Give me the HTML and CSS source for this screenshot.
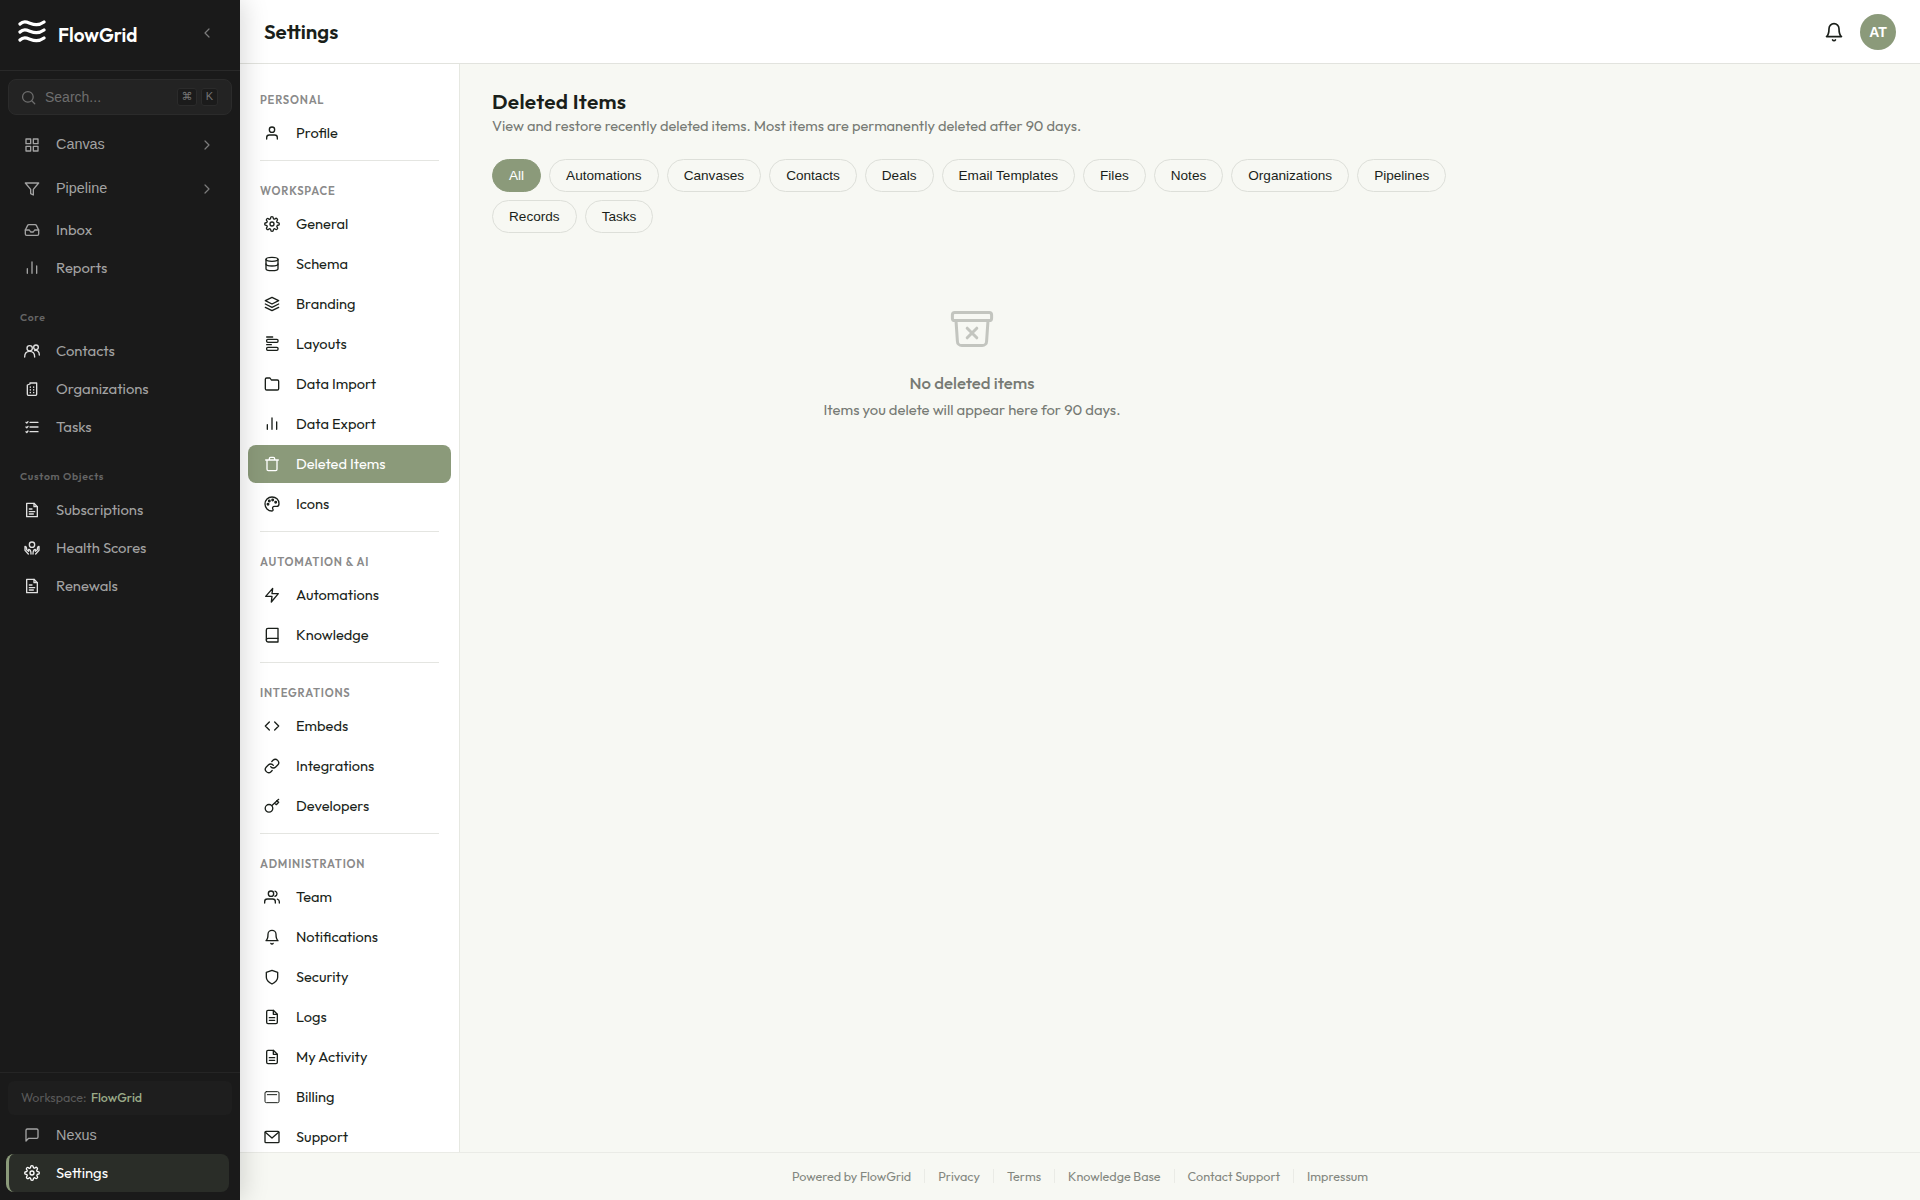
FILE: index.html
```html
<!DOCTYPE html>
<html lang="en">
<head>
    <meta charset="UTF-8">
    <meta name="viewport" content="width=device-width, initial-scale=1.0">
    <title>Settings - FlowGrid</title>
    <link rel="stylesheet" href="styles.css">
</head>

<body>
    <!-- Icon sprite -->
    <svg class="sprite" xmlns="http://www.w3.org/2000/svg">
        <symbol id="i-grid" viewBox="0 0 24 24"><rect x="3" y="3" width="7" height="7"/><rect x="14" y="3" width="7" height="7"/><rect x="14" y="14" width="7" height="7"/><rect x="3" y="14" width="7" height="7"/></symbol>
        <symbol id="i-funnel" viewBox="0 0 24 24"><path d="M22 3H2l8 9.46V19l4 2v-8.54L22 3z"/></symbol>
        <symbol id="i-inbox" viewBox="0 0 24 24"><path d="M22 12h-6l-2 3h-4l-2-3H2"/><path d="M5.45 5.11 2 12v6a2 2 0 0 0 2 2h16a2 2 0 0 0 2-2v-6l-3.45-6.89A2 2 0 0 0 16.76 4H7.24a2 2 0 0 0-1.79 1.11z"/></symbol>
        <symbol id="i-bars" viewBox="0 0 24 24"><path d="M5 20v-7M12 20V3M19 20V9"/></symbol>
        <symbol id="i-contacts" viewBox="0 0 24 24"><circle cx="8.5" cy="8" r="4"/><path d="M1 21c0-5 3-8.500 7.500-8.500S16 16 16 21"/><circle cx="18" cy="6.500" r="3.500"/><path d="M16 11.500c4-1.500 7 1.500 7 6.500"/></symbol>
        <symbol id="i-building" viewBox="0 0 24 24"><path d="M5 20V6l4-1.500V3h10v17a1.500 1.500 0 0 1-1.500 1.500h-11A1.500 1.500 0 0 1 5 20z"/><path d="M9.500 9v.5M14.500 9v.5M9.500 13v.5M14.500 13v.5M9.500 17v.5M14.500 17v.5"/></symbol>
        <symbol id="i-tasks" viewBox="0 0 24 24"><path d="M9 5h12M9 12h12M9 19h12M3 5l1.200 1.200L6 4M3 12l1.200 1.200L6 11M3 19l1.200 1.200L6 18"/></symbol>
        <symbol id="i-doc" viewBox="0 0 24 24"><path d="M14 2H6a2 2 0 0 0-2 2v16a2 2 0 0 0 2 2h12a2 2 0 0 0 2-2V8z"/><path d="M14 2v6h6M16 13H8M16 17H8"/></symbol>
        <symbol id="i-record" viewBox="0 0 24 24"><path d="M15 2H4v20h16V7z"/><path d="M15 2v5h5M8 10.500h4M8 14.500h8M8 18h6"/></symbol>
        <symbol id="i-health" viewBox="0 0 24 24"><circle cx="12" cy="7" r="4"/><path d="M1.500 9.500v6l5 5.500M1.500 9.500c2.500 0 2.500 2 2.500 5l3 2.500v-3c3 0 3.500 3 3.500 7M22.500 9.500v6l-5 5.500M22.500 9.500c-2.500 0-2.500 2-2.500 5L17 17v-3c-3 0-3.500 3-3.500 7"/></symbol>
        <symbol id="i-chat" viewBox="0 0 24 24"><path d="M21 15a2 2 0 0 1-2 2H7l-4 4V5a2 2 0 0 1 2-2h14a2 2 0 0 1 2 2z"/></symbol>
        <symbol id="i-gear" viewBox="0 0 24 24"><circle cx="12" cy="12" r="3"/><path d="M19.400 15a1.650 1.650 0 0 0 .33 1.820l.06.06a2 2 0 0 1-2.830 2.830l-.06-.06a1.650 1.650 0 0 0-2.800 1.170V21a2 2 0 0 1-4 0v-.09a1.650 1.650 0 0 0-2.900-1.180l-.06.06a2 2 0 0 1-2.830-2.830l.06-.06a1.650 1.650 0 0 0-1.170-2.800H3a2 2 0 0 1 0-4h.09a1.650 1.650 0 0 0 1.180-2.900l-.06-.06a2 2 0 0 1 2.830-2.830l.06.06a1.650 1.650 0 0 0 2.800-1.170V3a2 2 0 0 1 4 0v.09a1.650 1.650 0 0 0 2.800 1.170l.06-.06a2 2 0 0 1 2.830 2.830l-.06.06a1.650 1.650 0 0 0 1.170 2.800H21a2 2 0 0 1 0 4h-.09a1.650 1.650 0 0 0-1.510 1.110z"/></symbol>
        <symbol id="i-search" viewBox="0 0 24 24"><circle cx="11" cy="11" r="8.500"/><path d="m22 22-4.500-4.500"/></symbol>
        <symbol id="i-right" viewBox="0 0 24 24"><path d="m9 18 6-6-6-6"/></symbol>
        <symbol id="i-left" viewBox="0 0 24 24"><path d="m15 18-6-6 6-6"/></symbol>
        <symbol id="i-user" viewBox="0 0 24 24"><circle cx="12" cy="7" r="4"/><path d="M20 21v-2a4 4 0 0 0-4-4H8a4 4 0 0 0-4 4v2"/></symbol>
        <symbol id="i-database" viewBox="0 0 24 24"><ellipse cx="12" cy="5" rx="9" ry="3"/><path d="M21 12c0 1.660-4 3-9 3s-9-1.340-9-3"/><path d="M3 5v14c0 1.660 4 3 9 3s9-1.340 9-3V5"/></symbol>
        <symbol id="i-layers" viewBox="0 0 24 24"><path d="M12 2 2 7l10 5 10-5-10-5z"/><path d="m2 17 10 5 10-5M2 12l10 5 10-5"/></symbol>
        <symbol id="i-layout" viewBox="0 0 24 24"><path d="M4 1.500h9M4 13h7"/><rect x="4" y="5" width="17" height="4.500" rx="1.500"/><rect x="4" y="17" width="17" height="4.500" rx="1.500"/></symbol>
        <symbol id="i-folder" viewBox="0 0 24 24"><path d="M22 19a2 2 0 0 1-2 2H4a2 2 0 0 1-2-2V5a2 2 0 0 1 2-2h5l2 3h9a2 2 0 0 1 2 2z"/></symbol>
        <symbol id="i-trash" viewBox="0 0 24 24"><path d="M2.500 6h19M19.500 6v14a2 2 0 0 1-2 2h-11a2 2 0 0 1-2-2V6M8 6V4a2 2 0 0 1 2-2h4a2 2 0 0 1 2 2v2"/></symbol>
        <symbol id="i-palette" viewBox="0 0 24 24"><path d="M12 1.500C6 1.500 1.500 6.200 1.500 12S6 22.500 12 22.500c1.600 0 2-1.600 1.300-2.800-1-2-.3-4.200 2.400-4.200H19c2.200 0 3.500-1.500 3.500-4C22.500 5.500 18 1.500 12 1.500z"/><circle cx="6" cy="12.500" r="1.200"/><circle cx="8" cy="7.500" r="1.200"/><circle cx="13" cy="6" r="1.200"/><circle cx="17.500" cy="9.500" r="1.200"/></symbol>
        <symbol id="i-bolt" viewBox="0 0 24 24"><path d="M13 2 2.500 14H12l-1 8.500L21.500 10H12l1-8z"/></symbol>
        <symbol id="i-book" viewBox="0 0 24 24"><path d="M3.500 19.500A2.500 2.500 0 0 1 6 17h15"/><path d="M6 2h15v20.500H6a2.500 2.500 0 0 1-2.500-2.500V4.500A2.500 2.500 0 0 1 6 2z"/></symbol>
        <symbol id="i-code" viewBox="0 0 24 24"><path d="m16 18 6-6-6-6M8 6l-6 6 6 6"/></symbol>
        <symbol id="i-link" viewBox="0 0 24 24"><path d="M10 13a5 5 0 0 0 7.540.54l3-3a5 5 0 0 0-7.070-7.070l-1.720 1.710"/><path d="M14 11a5 5 0 0 0-7.540-.54l-3 3a5 5 0 0 0 7.070 7.070l1.710-1.710"/></symbol>
        <symbol id="i-key" viewBox="0 0 24 24"><circle cx="7.500" cy="15.500" r="5.700"/><path d="M22 2 11.500 11.500M16 7.500l2.500 2.500L22 6.500 19 4"/></symbol>
        <symbol id="i-team" viewBox="0 0 24 24"><path d="M17 21v-2a4 4 0 0 0-4-4H5a4 4 0 0 0-4 4v2"/><circle cx="10.500" cy="7" r="4"/><path d="M23 21v-2a4 4 0 0 0-3-3.870M16.500 3.130a4 4 0 0 1 0 7.750"/></symbol>
        <symbol id="i-bell" viewBox="0 0 24 24"><path d="M18 8A6 6 0 0 0 6 8c0 7-3 9.500-3 9.500h18S18 15 18 8"/><path d="M13.730 21.500a2 2 0 0 1-3.460 0"/></symbol>
        <symbol id="i-shield" viewBox="0 0 24 24"><path d="M12 22.500s8.500-4 8.500-10V5L12 2 3.500 5v7.500c0 6 8.500 10 8.500 10z"/></symbol>
        <symbol id="i-card" viewBox="0 0 24 24"><rect x="1.500" y="4" width="21" height="16.500" rx="2"/><path d="M5 8.500h14"/></symbol>
        <symbol id="i-mail" viewBox="0 0 24 24"><rect x="1.500" y="3.500" width="21" height="17" rx="1.500"/><path d="m2 5 10 8.500L22 5"/></symbol>
        <symbol id="i-archive" viewBox="0 0 24 24"><rect x="2.200" y="3.700" width="19.600" height="4.100" rx="1.200"/><path d="m4 7.800.7 10.300a2.200 2.200 0 0 0 2.200 2.200h10.200a2.200 2.200 0 0 0 2.200-2.200L20 7.800M9.600 11.600l4.800 4.800M14.400 11.600l-4.800 4.800"/></symbol>
    </svg>

    <div class="app">
        <aside class="sidebar">
            <div class="brand">
                <svg class="logo" viewBox="0 0 28 24"><path d="M2 5C9-2 15 11 26 3M2 13C9 6 15 19 26 11M2 21C9 14 15 27 26 19"/></svg>
                <span class="brand-name">FlowGrid</span>
                <svg class="icon collapse"><use href="#i-left"/></svg>
            </div>

            <div class="search">
                <svg class="icon"><use href="#i-search"/></svg>
                <span class="search-text">Search...</span>
                <kbd class="cmd">⌘</kbd>
                <kbd>K</kbd>
            </div>

            <nav class="main-nav">
                <a class="nav-item tall"><svg class="icon"><use href="#i-grid"/></svg><span>Canvas</span><svg class="icon chevron"><use href="#i-right"/></svg></a>
                <a class="nav-item tall"><svg class="icon"><use href="#i-funnel"/></svg><span>Pipeline</span><svg class="icon chevron"><use href="#i-right"/></svg></a>
                <a class="nav-item"><svg class="icon"><use href="#i-inbox"/></svg><span>Inbox</span></a>
                <a class="nav-item"><svg class="icon"><use href="#i-bars"/></svg><span>Reports</span></a>

                <div class="nav-label">Core</div>
                <a class="nav-item object"><svg class="icon"><use href="#i-contacts"/></svg><span>Contacts</span></a>
                <a class="nav-item object"><svg class="icon"><use href="#i-building"/></svg><span>Organizations</span></a>
                <a class="nav-item object"><svg class="icon"><use href="#i-tasks"/></svg><span>Tasks</span></a>

                <div class="nav-label">Custom Objects</div>
                <a class="nav-item object"><svg class="icon"><use href="#i-record"/></svg><span>Subscriptions</span></a>
                <a class="nav-item object"><svg class="icon"><use href="#i-health"/></svg><span>Health Scores</span></a>
                <a class="nav-item object"><svg class="icon"><use href="#i-record"/></svg><span>Renewals</span></a>
            </nav>

            <div class="sidebar-footer">
                <div class="workspace">Workspace: <strong>FlowGrid</strong></div>
                <a class="nav-item button"><svg class="icon"><use href="#i-chat"/></svg><span>Nexus</span></a>
                <a class="nav-item active"><svg class="icon"><use href="#i-gear"/></svg><span>Settings</span></a>
            </div>
        </aside>

        <div class="page">
            <header class="topbar">
                <h1>Settings</h1>
                <svg class="icon bell"><use href="#i-bell"/></svg>
                <div class="avatar">AT</div>
            </header>

            <div class="body">
                <nav class="settings-nav">
                    <section>
                        <h3>Personal</h3>
                        <a><svg class="icon"><use href="#i-user"/></svg><span>Profile</span></a>
                    </section>
                    <section>
                        <h3>Workspace</h3>
                        <a><svg class="icon"><use href="#i-gear"/></svg><span>General</span></a>
                        <a><svg class="icon"><use href="#i-database"/></svg><span>Schema</span></a>
                        <a><svg class="icon"><use href="#i-layers"/></svg><span>Branding</span></a>
                        <a><svg class="icon"><use href="#i-layout"/></svg><span>Layouts</span></a>
                        <a><svg class="icon"><use href="#i-folder"/></svg><span>Data Import</span></a>
                        <a><svg class="icon"><use href="#i-bars"/></svg><span>Data Export</span></a>
                        <a class="active"><svg class="icon"><use href="#i-trash"/></svg><span>Deleted Items</span></a>
                        <a><svg class="icon"><use href="#i-palette"/></svg><span>Icons</span></a>
                    </section>
                    <section>
                        <h3>Automation &amp; AI</h3>
                        <a><svg class="icon"><use href="#i-bolt"/></svg><span>Automations</span></a>
                        <a><svg class="icon"><use href="#i-book"/></svg><span>Knowledge</span></a>
                    </section>
                    <section>
                        <h3>Integrations</h3>
                        <a><svg class="icon"><use href="#i-code"/></svg><span>Embeds</span></a>
                        <a><svg class="icon"><use href="#i-link"/></svg><span>Integrations</span></a>
                        <a><svg class="icon"><use href="#i-key"/></svg><span>Developers</span></a>
                    </section>
                    <section>
                        <h3>Administration</h3>
                        <a><svg class="icon"><use href="#i-team"/></svg><span>Team</span></a>
                        <a><svg class="icon"><use href="#i-bell"/></svg><span>Notifications</span></a>
                        <a><svg class="icon"><use href="#i-shield"/></svg><span>Security</span></a>
                        <a><svg class="icon"><use href="#i-doc"/></svg><span>Logs</span></a>
                        <a><svg class="icon"><use href="#i-doc"/></svg><span>My Activity</span></a>
                        <a><svg class="icon thin"><use href="#i-card"/></svg><span>Billing</span></a>
                        <a><svg class="icon"><use href="#i-mail"/></svg><span>Support</span></a>
                    </section>
                </nav>

                <main class="content">
                    <h2>Deleted Items</h2>
                    <p class="intro">View and restore recently deleted items. Most items are permanently deleted after 90 days.</p>

                    <div class="filters">
                        <button class="active">All</button>
                        <button>Automations</button>
                        <button>Canvases</button>
                        <button>Contacts</button>
                        <button>Deals</button>
                        <button>Email Templates</button>
                        <button>Files</button>
                        <button>Notes</button>
                        <button>Organizations</button>
                        <button>Pipelines</button>
                        <button>Records</button>
                        <button>Tasks</button>
                    </div>

                    <div class="empty">
                        <svg class="icon"><use href="#i-archive"/></svg>
                        <p class="empty-title">No deleted items</p>
                        <p class="empty-text">Items you delete will appear here for 90 days.</p>
                    </div>
                </main>
            </div>

            <footer class="footer">
                <span>Powered by FlowGrid</span>
                <a>Privacy</a>
                <a>Terms</a>
                <a>Knowledge Base</a>
                <a>Contact Support</a>
                <a>Impressum</a>
            </footer>
        </div>
    </div>
</body>
</html>
```
FILE: styles.css
```css
* {
    box-sizing: border-box;
}

body {
    margin: 0;
    font-family: Outfit, Lato, sans-serif;
    font-size: 14.6px;
    color: #1a1f1a;
    background-color: #f7f8f3;
}

h1, h2, h3, p {
    margin: 0;
}

.sprite {
    display: none;
}

.icon {
    width: 16px;
    height: 16px;
    flex-shrink: 0;
    fill: none;
    stroke: currentColor;
    stroke-width: 2;
    stroke-linecap: round;
    stroke-linejoin: round;
    overflow: visible;
}

.icon.thin {
    stroke-width: 1.5;
}

.app {
    display: flex;
    height: 100vh;
    overflow: hidden;
}

/* Sidebar */
.sidebar {
    position: relative;
    z-index: 10;
    display: flex;
    flex-direction: column;
    width: 240px;
    flex-shrink: 0;
    font-size: 14.8px;
    color: #a3a3a3;
    background-color: #1a1a1a;
    box-shadow: 4px 0 24px rgba(0, 0, 0, 0.15);
}

.brand {
    display: flex;
    align-items: center;
    height: 71px;
    padding: 0 25px 4px 18px;
    border-bottom: 1px solid #292929;
}

.logo {
    width: 28px;
    height: 24px;
    margin-top: -5px;
    fill: none;
    stroke: #fff;
    stroke-width: 3.2;
    stroke-linecap: round;
}

.brand-name {
    flex: 1;
    margin: 4px 0 0 12px;
    font-size: 19px;
    font-weight: 600;
    color: #fff;
}

.collapse {
    stroke-width: 1.8;
    color: #7c7c7c;
}

.search {
    display: flex;
    align-items: center;
    gap: 4px;
    height: 36px;
    margin: 8px 8px 0;
    padding: 0 13px 0 12px;
    border: 1px solid #2b2b2b;
    border-radius: 8px;
    background-color: #232323;
    font-family: "Liberation Sans", sans-serif;
    font-size: 14px;
    color: #6e6e6e;
}

.search .icon {
    width: 15px;
    height: 15px;
}

.search-text {
    flex: 1;
    margin-left: 5px;
}

kbd {
    width: 17px;
    height: 18px;
    border: 1px solid #2b2b2b;
    border-radius: 3px;
    background-color: #1b1b1b;
    font-family: "Liberation Sans", "DejaVu Sans", sans-serif;
    font-size: 11px;
    line-height: 15px;
    text-align: center;
    color: #757575;
}

kbd.cmd {
    width: 20px;
}

.main-nav {
    flex: 1;
    padding-top: 8px;
}

.nav-item {
    display: flex;
    align-items: center;
    gap: 16px;
    height: 38px;
    padding: 0 25px 0 24px;
}

.nav-item.tall {
    height: 44px;
}

.nav-item.tall,
.nav-item.button {
    font-family: "Liberation Sans", sans-serif;
    font-size: 14.4px;
}

.nav-item span {
    flex: 1;
    padding-bottom: 1px;
}

.nav-item.tall span {
    padding-bottom: 2px;
}

.nav-item.object .icon {
    color: #e0e0e0;
}

.nav-item .chevron {
    stroke-width: 1.8;
    color: #7c7c7c;
}

.nav-label {
    padding: 24px 20px 8px;
    font-size: 10.4px;
    font-weight: 600;
    line-height: 13px;
    letter-spacing: 0.7px;
    color: #656565;
}

.sidebar-footer {
    padding: 8px 0;
    border-top: 1px solid #252525;
}

.workspace {
    height: 34px;
    margin: 0 8px 1px;
    padding-left: 13px;
    border-radius: 6px;
    background-color: #1e1e1e;
    font-size: 12.5px;
    line-height: 33px;
    color: #5a5a5a;
}

.workspace strong {
    margin-left: 2px;
    font-weight: 500;
    color: #9aab88;
}

.sidebar-footer .active {
    margin: 0 11px 0 6px;
    padding-left: 15px;
    border-left: 3px solid #8b9a7a;
    border-radius: 8px;
    background-color: #2a2d28;
    color: #fff;
}

/* Top bar */
.page {
    flex: 1;
    display: flex;
    flex-direction: column;
    min-width: 0;
}

.topbar {
    display: flex;
    align-items: center;
    height: 64px;
    flex-shrink: 0;
    padding: 0 24px;
    border-bottom: 1px solid #e2e3de;
    background-color: #fff;
}

.topbar h1 {
    flex: 1;
    padding-bottom: 1px;
    font-size: 20.5px;
    font-weight: 600;
}

.bell {
    width: 20px;
    height: 20px;
    margin-right: 16px;
}

.avatar {
    width: 36px;
    height: 36px;
    border-radius: 50%;
    background-color: #8b9a7a;
    font: bold 14px/36px "Liberation Sans", sans-serif;
    text-align: center;
    color: #fff;
}

.body {
    flex: 1;
    display: flex;
    min-height: 0;
}

/* Settings navigation */
.settings-nav {
    width: 220px;
    flex-shrink: 0;
    padding: 6px 8px;
    border-right: 1px solid #e6e8e1;
    background-color: #fff;
    overflow: hidden;
}

.settings-nav section {
    display: flex;
    flex-direction: column;
    gap: 2px;
}

/* divider between groups */
.settings-nav section + section::before {
    content: "";
    height: 1px;
    margin: 8px 12px -2px;
    background-color: #e4e5e1;
}

.settings-nav h3 {
    padding: 23px 12px 5px;
    font-size: 11.2px;
    font-weight: 600;
    line-height: 14px;
    letter-spacing: 0.8px;
    text-transform: uppercase;
    color: #8a8a8a;
}

.settings-nav a {
    display: flex;
    align-items: center;
    gap: 16px;
    height: 38px;
    padding: 0 16px;
    border-radius: 8px;
}

.settings-nav a span {
    padding-bottom: 1px;
}

.settings-nav a.active {
    background-color: #8b9a7a;
    color: #fff;
}

/* Content */
.content {
    flex: 1;
    padding: 24px 32px;
}

.content h2 {
    font-size: 20.8px;
    font-weight: 600;
    line-height: 26px;
    letter-spacing: 0.3px;
}

.intro {
    margin-top: 2px;
    line-height: 20px;
    color: #767a74;
}

.filters {
    display: flex;
    flex-wrap: wrap;
    gap: 8px;
    max-width: 960px;
    margin-top: 23px;
}

.filters button {
    height: 33px;
    padding: 0 16px;
    border: 1px solid #dddfd9;
    border-radius: 17px;
    background-color: transparent;
    font-family: "Liberation Sans", sans-serif;
    font-size: 13.6px;
    color: #1a1f1a;
}

.filters button.active {
    border-color: #8b9a7a;
    background-color: #8b9a7a;
    color: #fff;
}

.empty {
    display: flex;
    flex-direction: column;
    align-items: center;
    max-width: 960px;
    padding-top: 72px;
    color: #767a74;
}

.empty .icon {
    width: 48px;
    height: 48px;
    stroke-width: 1.5;
    opacity: 0.4;
}

.empty-title {
    margin-top: 18px;
    font-size: 16.8px;
    font-weight: 500;
    line-height: 24px;
}

.empty-text {
    margin-top: 4px;
    font-size: 14.8px;
    line-height: 22px;
}

/* Footer */
.footer {
    display: flex;
    justify-content: center;
    align-items: center;
    height: 48px;
    flex-shrink: 0;
    padding-bottom: 1px;
    border-top: 1px solid #eaebe6;
    font-size: 12.6px;
    line-height: 14px;
    color: #83877f;
}

.footer > * {
    padding: 0 13px;
}

.footer a {
    border-left: 1px solid #eaebe6;
}
```
